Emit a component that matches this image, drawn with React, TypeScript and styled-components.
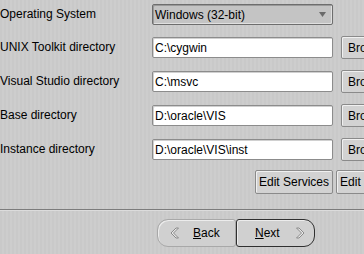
import React from "react";
import styled, { createGlobalStyle } from "styled-components";

const Global = createGlobalStyle`
  html, body { margin: 0; padding: 0; }
  body {
    width: 364px; height: 254px; overflow: hidden;
    background-color: #cacaca;
    background-image: repeating-linear-gradient(90deg, #c9c9c9 0px, #c9c9c9 2px, #cdcdcd 2px, #cdcdcd 4px);
    font-family: Arial, "Liberation Sans", sans-serif;
  }
`;

const Page = styled.div`
  display: flex;
  flex-direction: column;
  width: 364px;
  height: 254px;
  overflow: hidden;
`;

const Form = styled.div`
  display: flex;
  flex-direction: column;
  padding-top: 4px;
`;

const Row = styled.div<{ $gap: number }>`
  display: grid;
  grid-template-columns: 152px 181px 8px 60px;
  height: 21px;
  margin-top: ${(p) => p.$gap}px;
  align-items: center;
`;

const Label = styled.div`
  grid-column: 1;
  font-size: 12px;
  line-height: 14px;
  margin-top: -1px;
  color: #000;
  white-space: nowrap;
`;

const Select = styled.div`
  grid-column: 2;
  height: 21px;
  box-sizing: border-box;
  border: 1px solid #6e6e6e;
  border-radius: 2px;
  background: #c4c4c4;
  box-shadow: inset 1px 1px 0 #9a9a9a, inset -1px -1px 0 #e0e0e0;
  display: flex;
  align-items: center;
  padding: 0 6px 0 2px;
  font-size: 12px;
  color: #000;
`;

const SelectText = styled.span`
  flex: 1;
`;

const Field = styled.div`
  grid-column: 2;
  height: 21px;
  box-sizing: border-box;
  border: 1px solid #8c8c8c;
  border-radius: 2px;
  background: #fff;
  box-shadow: inset 1px 1px 0 #d0d0d0;
  display: flex;
  align-items: center;
  padding-left: 2px;
  font-size: 12px;
  color: #000;
  white-space: nowrap;
`;

const SideButton = styled.div`
  grid-column: 4;
  height: 23px;
  box-sizing: border-box;
  border: 1px solid #8a8a8a;
  border-radius: 2px;
  background: #d2d2d2;
  box-shadow: inset 1px 1px 0 #f0f0f0;
  display: flex;
  align-items: center;
  padding-left: 6px;
  font-size: 12px;
  color: #000;
  white-space: nowrap;
  overflow: hidden;
`;

const Actions = styled.div`
  display: flex;
  gap: 3px;
  margin-top: 11px;
  padding-left: 255px;
  width: 400px;
`;

const ActionButton = styled.div`
  height: 24px;
  box-sizing: border-box;
  border: 1px solid #8a8a8a;
  border-radius: 2px;
  background: #d2d2d2;
  box-shadow: inset 1px 1px 0 #f0f0f0;
  display: flex;
  align-items: center;
  padding: 0 3px;
  font-size: 12px;
  color: #000;
  white-space: nowrap;
  flex: none;
`;

const Separator = styled.div`
  margin-top: 15px;
  height: 1px;
  background: #7c7c7c;
  border-bottom: 1px solid #dcdcdc;
`;

const Nav = styled.div`
  display: flex;
  padding-left: 157px;
  margin-top: 8px;
`;

const NavButton = styled.div<{ $side: "left" | "right" }>`
  width: 79px;
  height: 28px;
  box-sizing: border-box;
  border: 1px solid ${(p) => (p.$side === "right" ? "#303030" : "#a8a8a8")};
  border-radius: ${(p) => (p.$side === "left" ? "11px 3px 3px 11px" : "3px 11px 11px 3px")};
  background: #d0d0d0;
  box-shadow: inset 1px 1px 0 #ececec;
  display: flex;
  align-items: center;
  font-size: 12px;
  color: #000;
`;

const Chevron = styled.svg`
  width: 10px;
  height: 12px;
  flex: none;
  display: block;
`;

const NavText = styled.span<{ $ml: number }>`
  margin-left: ${(p) => p.$ml}px;
  display: flex;
  align-items: center;
  u { text-decoration: underline; }
`;

const LeftChevron = () => (
  <Chevron viewBox="0 0 10 12">
    <path d="M6 1 L1 6 L6 11 L8.5 11 L3.5 6 L8.5 1 Z" fill="#e8e8e8" stroke="#8a8a8a" strokeWidth="1" />
  </Chevron>
);

const RightChevron = () => (
  <Chevron viewBox="0 0 10 12">
    <path d="M4 1 L9 6 L4 11 L1.5 11 L6.5 6 L1.5 1 Z" fill="#e8e8e8" stroke="#8a8a8a" strokeWidth="1" />
  </Chevron>
);

const Arrow = styled.svg`
  width: 7px;
  height: 5px;
`;

const rows = [
  { label: "UNIX Toolkit directory", value: "C:\\cygwin" },
  { label: "Visual Studio directory", value: "C:\\msvc" },
  { label: "Base directory", value: "D:\\oracle\\VIS" },
  { label: "Instance directory", value: "D:\\oracle\\VIS\\inst" },
];

export default function App() {
  return (
    <Page>
      <Global />
      <Form>
        <Row $gap={0}>
          <Label>Operating System</Label>
          <Select>
            <SelectText>Windows (32-bit)</SelectText>
            <Arrow viewBox="0 0 7 5">
              <path d="M0 0 H7 L3.5 5 Z" fill="#6a6a6a" />
            </Arrow>
          </Select>
        </Row>
        {rows.map((r, i) => (
          <Row key={r.label} $gap={i === 0 ? 11 : 13}>
            <Label>{r.label}</Label>
            <Field>{r.value}</Field>
            <SideButton>Browse...</SideButton>
          </Row>
        ))}
      </Form>
      <Actions>
        <ActionButton>Edit Services</ActionButton>
        <ActionButton>Edit Parameters</ActionButton>
      </Actions>
      <Separator />
      <Nav>
        <NavButton $side="left">
          <NavText $ml={12}><LeftChevron /></NavText>
          <NavText $ml={13}><u>B</u>ack</NavText>
        </NavButton>
        <NavButton $side="right">
          <NavText $ml={18}><u>N</u>ext</NavText>
          <NavText $ml={15}><RightChevron /></NavText>
        </NavButton>
      </Nav>
    </Page>
  );
}
